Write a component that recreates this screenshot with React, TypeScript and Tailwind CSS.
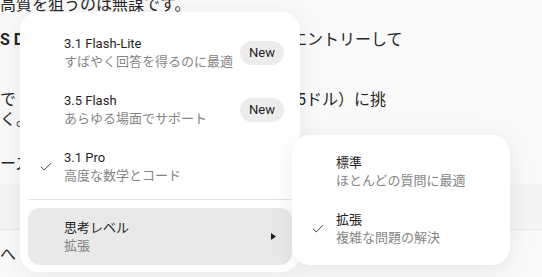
import { Check } from "lucide-react";

type Item = {
  title: string;
  sub: string;
  badge?: boolean;
  checked?: boolean;
};

const models: Item[] = [
  { title: "3.1 Flash-Lite", sub: "すばやく回答を得るのに最適", badge: true },
  { title: "3.5 Flash", sub: "あらゆる場面でサポート", badge: true },
  { title: "3.1 Pro", sub: "高度な数学とコード", checked: true },
];

const levels: Item[] = [
  { title: "標準", sub: "ほとんどの質問に最適" },
  { title: "拡張", sub: "複雑な問題の解決", checked: true },
];

function MenuRow({ item }: { item: Item }) {
  return (
    <div className="flex items-center h-[57px] pl-[11px] pr-[8px] rounded-[12px]">
      <div className="w-[25px] flex items-center">
        {item.checked && <Check size={14} strokeWidth={1.5} className="text-[#1f1f1f]" />}
      </div>
      <div className="flex-1 flex flex-col">
        <span className="text-[13px] leading-[18px] text-[#1f1f1f]">{item.title}</span>
        <span className="text-[13px] leading-[18px] text-[#858585]">{item.sub}</span>
      </div>
      {item.badge && (
        <span className="h-[24px] px-[9px] flex items-center rounded-full bg-[#ececec] text-[13px] text-[#1f1f1f]">
          New
        </span>
      )}
    </div>
  );
}

export default function App() {
  return (
    <div className="relative w-[542px] h-[277px] overflow-hidden bg-[#f9f9f9] text-[#262626] font-['Roboto','Noto_Sans_CJK_JP',sans-serif]">

      {/* BACKGROUND PAGE */}
      <div className="text-[16px] leading-[20px]">
        <div className="-mt-[5px] h-[20px]">高質を狙うのは無謀です。</div>
        <div className="mt-[15px] flex h-[20px]">
          <span className="w-[291px] font-bold">S D</span>
          <span>エントリーして</span>
        </div>
        <div className="mt-[40px] flex h-[20px]">
          <span className="w-[297px]">で</span>
          <span>5ドル）に挑</span>
        </div>
        <div className="h-[18px]">く。</div>
        <div className="mt-[26px] h-[20px]">ーズ</div>
        <div className="mt-[10px] h-[46px] bg-[#f5f5f5] border-b border-[#e6e6e6]" />
        <div className="mt-[15px] h-[20px]">へ ま</div>
      </div>

      {/* MODEL MENU */}
      <div className="absolute left-[20px] top-[12px] w-[280px] h-[260px] bg-white rounded-[18px] shadow-[0_4px_24px_rgba(0,0,0,0.07)] px-[8px] pt-[12px]">
        {models.map((m) => (
          <MenuRow key={m.title} item={m} />
        ))}
        <div className="mt-[4px] mb-[8px] h-px bg-[#e3e3e3]" />
        <div className="flex items-center h-[57px] pl-[11px] pr-[16px] rounded-[12px] bg-[#e9e9e9]">
          <div className="w-[25px]" />
          <div className="flex-1 flex flex-col pt-[1px]">
            <span className="text-[13px] leading-[18px] text-[#1f1f1f]">思考レベル</span>
            <span className="text-[13px] leading-[18px] text-[#858585]">拡張</span>
          </div>
          <svg width="5" height="7" viewBox="0 0 5 7">
            <path d="M0 0 L5 3.5 L0 7 Z" fill="#1f1f1f" />
          </svg>
        </div>
      </div>

      {/* LEVEL SUBMENU */}
      <div className="absolute left-[292px] top-[135px] w-[218px] h-[130px] bg-white rounded-[18px] shadow-[0_4px_24px_rgba(0,0,0,0.08)] px-[8px] pt-[8px]">
        {levels.map((l) => (
          <MenuRow key={l.title} item={l} />
        ))}
      </div>

    </div>
  );
}
